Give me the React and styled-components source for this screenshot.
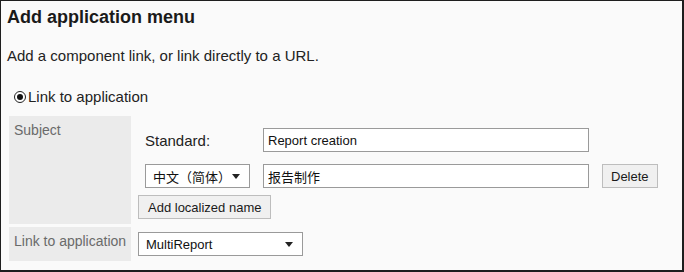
import React from 'react';
import styled, { createGlobalStyle } from 'styled-components';

const GlobalStyle = createGlobalStyle`
  html, body {
    margin: 0;
    padding: 0;
    background: #fafafa;
  }
  body {
    font-family: "Liberation Sans", Arial, "Noto Sans CJK SC", sans-serif;
    color: #222;
  }
`;

const Frame = styled.div`
  box-sizing: border-box;
  width: 684px;
  height: 272px;
  background: #fafafa;
  border-style: solid;
  border-color: #1e1e1e;
  border-width: 1px 2px 2px 1px;
  padding: 0 6px;
  overflow: hidden;
`;

const Title = styled.h1`
  margin: 5px 0 0;
  font-size: 18px;
  line-height: 22px;
  font-weight: bold;
  color: #1a1a1a;
`;

const Description = styled.p`
  margin: 18px 0 0;
  font-size: 15px;
  line-height: 20px;
`;

const RadioRow = styled.label`
  display: flex;
  align-items: center;
  gap: 2px;
  margin: 21px 0 0 7px;
  font-size: 15px;
  line-height: 20px;
`;

const RadioDot = styled.span`
  box-sizing: border-box;
  width: 12px;
  height: 12px;
  border: 1px solid #222;
  border-radius: 50%;
  display: flex;
  align-items: center;
  justify-content: center;
  background: #fff;
  &::after {
    content: '';
    width: 6px;
    height: 6px;
    border-radius: 50%;
    background: #111;
  }
`;

const FormTable = styled.div`
  display: grid;
  grid-template-columns: 122px 1fr;
  column-gap: 2px;
  row-gap: 3px;
  margin: 9px 0 0 2px;
`;

const LabelCell = styled.div`
  background: #ebebeb;
  color: #6a6a6a;
  font-size: 14px;
  line-height: 18px;
  padding: 5px 5px;
  white-space: nowrap;
`;

const ValueCell = styled.div`
  padding: 5px;
  font-size: 13px;
`;

const NameRows = styled.div`
  display: flex;
  flex-direction: column;
  align-items: flex-start;
  padding-top: 7px;
`;

const NameRow = styled.div`
  display: flex;
  align-items: center;
  gap: 13px;
  margin-left: 7px;
  margin-bottom: ${(p) => p.$space}px;
`;

const StandardLabel = styled.span`
  width: 105px;
  font-size: 15px;
  color: #222;
`;

const TextInput = styled.input`
  box-sizing: border-box;
  width: 326px;
  height: 24px;
  margin: 0;
  padding: 0 4px;
  border: 1px solid #9a9a9a;
  background: #fff;
  font-family: inherit;
  font-size: 13px;
  color: #111;
  outline: none;
`;

const SelectBox = styled.div`
  box-sizing: border-box;
  width: ${(p) => p.$width}px;
  height: 24px;
  display: flex;
  align-items: center;
  justify-content: space-between;
  padding: 0 9px 0 7px;
  border: 1px solid #9a9a9a;
  background: #fff;
  font-size: 13px;
  color: #111;
`;

const Caret = styled.span`
  width: 0;
  height: 0;
  border-left: 4px solid transparent;
  border-right: 4px solid transparent;
  border-top: 5px solid #222;
`;

const Button = styled.button`
  box-sizing: border-box;
  height: 24px;
  margin: 0;
  padding: 0 ${(p) => p.$pad}px;
  border: 1px solid #bdbdbd;
  background: #f0f0f0;
  font-family: inherit;
  font-size: 13px;
  color: #1a1a1a;
  cursor: pointer;
`;

const Select = ({ width, children }) => (
  <SelectBox $width={width}>
    <span>{children}</span>
    <Caret />
  </SelectBox>
);

export default function App() {
  return (
    <>
      <GlobalStyle />
      <Frame>
        <Title>Add application menu</Title>
        <Description>Add a component link, or link directly to a URL.</Description>
        <RadioRow>
          <RadioDot />
          Link to application
        </RadioRow>
        <FormTable>
          <LabelCell>Subject</LabelCell>
          <ValueCell>
            <NameRows>
              <NameRow $space={12}>
                <StandardLabel>Standard:</StandardLabel>
                <TextInput defaultValue="Report creation" />
              </NameRow>
              <NameRow $space={7}>
                <Select width={105}>中文（简体）</Select>
                <TextInput defaultValue="报告制作" />
                <Button $pad={8}>Delete</Button>
              </NameRow>
              <Button $pad={9}>Add localized name</Button>
            </NameRows>
          </ValueCell>
          <LabelCell>Link to application</LabelCell>
          <ValueCell>
            <Select width={165}>MultiReport</Select>
          </ValueCell>
        </FormTable>
      </Frame>
    </>
  );
}
